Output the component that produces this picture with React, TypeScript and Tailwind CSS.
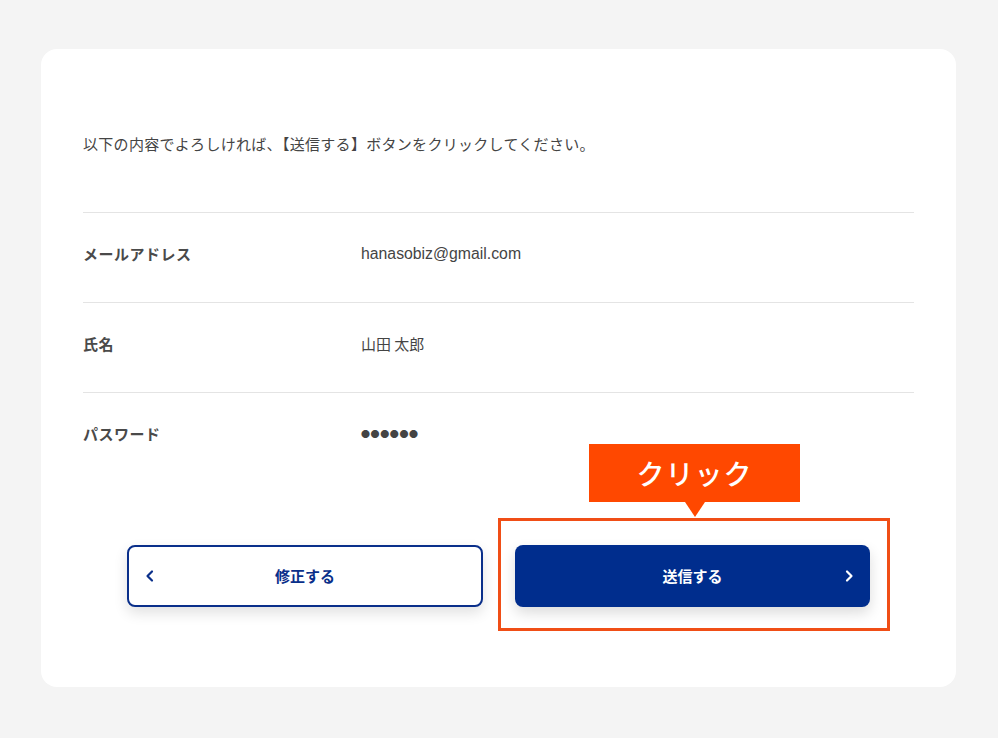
const jp = "font-['Noto_Sans_CJK_JP','Noto_Sans',sans-serif]";

function ChevronLeft() {
  return (
    <svg width="10" height="14" viewBox="0 0 10 14" fill="none" className="shrink-0">
      <path d="M7 2.5L2.5 7L7 11.5" stroke="currentColor" strokeWidth="2.2" strokeLinecap="round" strokeLinejoin="round" />
    </svg>
  );
}

function ChevronRight() {
  return (
    <svg width="10" height="14" viewBox="0 0 10 14" fill="none" className="shrink-0">
      <path d="M3 2.5L7.5 7L3 11.5" stroke="currentColor" strokeWidth="2.2" strokeLinecap="round" strokeLinejoin="round" />
    </svg>
  );
}

const rows = [
  { label: "メールアドレス", value: "hanasobiz@gmail.com", latin: true },
  { label: "氏名", value: "山田 太郎" },
  { label: "パスワード", value: "●●●●●●", dots: true },
];

export default function App() {
  return (
    <div className={`min-h-[738px] w-full bg-[#f4f4f4] pt-[49px] pb-[51px] ${jp}`}>
      <div className="mx-[41px] w-[915px] rounded-[16px] bg-white px-[42px] pt-[84px] pb-[80px]">
        <p className="text-[15px] leading-[22px] tracking-[0.3px] text-[#444]">
          以下の内容でよろしければ、【送信する】ボタンをクリックしてください。
        </p>

        <dl className="mt-[57px]">
          {rows.map((r, i) => (
            <div
              key={r.label}
              className={`flex border-t border-[#e4e4e4] pt-[30px] ${i === rows.length - 1 ? "pb-[38px]" : "pb-[37px]"}`}
            >
              <dt className="w-[278px] text-[15px] font-bold leading-[22px] tracking-[0.5px] text-[#4a4a4a]">{r.label}</dt>
              <dd
                className={
                  r.latin
                    ? "font-['Liberation_Sans','Noto_Sans_CJK_JP',sans-serif] text-[15.8px] leading-[22px] text-[#444]"
                    : r.dots
                      ? "text-[9px] leading-[22px] tracking-[0.6px] text-[#444]"
                      : "text-[15px] leading-[22px] text-[#444]"
                }
              >
                {r.value}
              </dd>
            </div>
          ))}
        </dl>

        <div className="mt-[62px] flex justify-center gap-8">
          <button className="flex h-[62px] w-[356px] items-center rounded-[8px] border-2 border-[#0a2f8a] bg-white px-4 text-[#0a2f8a] shadow-[0_6px_14px_rgba(0,0,0,0.12)]">
            <ChevronLeft />
            <span className="flex-1 pr-[10px] text-[15px] font-bold">修正する</span>
          </button>

          <div className="relative">
            <button className="flex h-[62px] w-[355px] items-center rounded-[8px] bg-[#002d8d] px-4 text-white shadow-[0_6px_14px_rgba(0,0,0,0.14)]">
              <span className="flex-1 pl-[10px] text-[15px] font-bold">送信する</span>
              <ChevronRight />
            </button>

            {/* annotation */}
            <div className="pointer-events-none absolute -top-[27px] -left-[17px] h-[113px] w-[392px] border-[3px] border-[#f04e16]" />
            <div className="pointer-events-none absolute -top-[101px] left-[74px] flex h-[58px] w-[211px] items-center justify-center bg-[#ff4800] text-[28px] font-medium tracking-[1px] text-white">
              クリック
              <div className="absolute top-full left-1/2 -ml-[10px] h-0 w-0 border-x-[10px] border-t-[15px] border-x-transparent border-t-[#ff4800]" />
            </div>
          </div>
        </div>
      </div>
    </div>
  );
}
